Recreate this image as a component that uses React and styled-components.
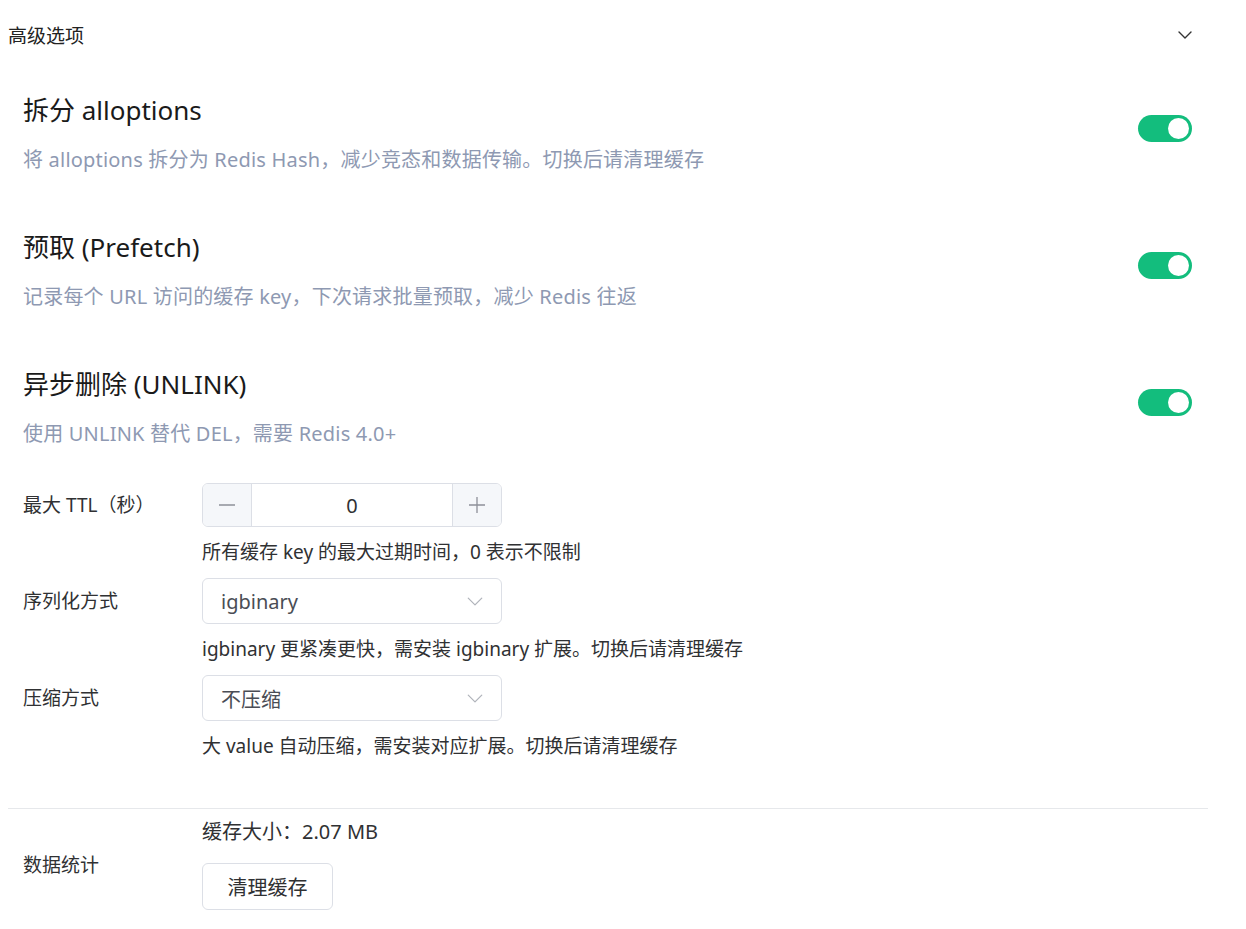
import React from 'react';
import styled, { createGlobalStyle } from 'styled-components';

const GlobalStyle = createGlobalStyle`
  body {
    margin: 0;
    background: #fff;
    font-family: "Noto Sans", "Noto Sans CJK SC", sans-serif;
    color: #303133;
  }
`;

const Panel = styled.div`
  width: 1200px;
  padding: 0 38px 0 8px;
`;

const Header = styled.div`
  display: flex;
  align-items: center;
  justify-content: space-between;
  height: 70px;
  padding-right: 16px;
  font-size: 19px;
  color: #222;
`;

const Body = styled.div`
  padding: 2px 16px 0 15px;
`;

const SwitchRow = styled.div`
  display: flex;
  justify-content: space-between;
  align-items: flex-start;
  padding: 20px 0 35px;
`;

const SwitchText = styled.div`
  display: flex;
  flex-direction: column;
  gap: 18px;
`;

const Title = styled.div`
  font-size: 26px;
  line-height: 36px;
  color: #1a1a1a;
`;

const Desc = styled.div`
  font-size: 20px;
  line-height: 28px;
  letter-spacing: 0.2px;
  color: #8e99b2;
`;

const Toggle = styled.div`
  width: 54px;
  height: 27px;
  margin-top: 23px;
  border-radius: 14px;
  background: #13bd7d;
  display: flex;
  align-items: center;
  justify-content: flex-end;
  padding: 0 3px;
  box-sizing: border-box;

  &::after {
    content: "";
    width: 21px;
    height: 21px;
    border-radius: 50%;
    background: #fff;
  }
`;

const FormItem = styled.div`
  display: flex;
  align-items: ${(p) => (p.center ? 'center' : 'flex-start')};
  margin-bottom: ${(p) => p.mb || 0}px;
`;

const Label = styled.div`
  width: 179px;
  flex-shrink: 0;
  font-size: 19px;
  line-height: ${(p) => p.h || 44}px;
  color: #303133;
`;

const Control = styled.div`
  display: flex;
  flex-direction: column;
  align-items: flex-start;
`;

const Help = styled.div`
  margin-top: 12px;
  font-size: 19px;
  line-height: 26px;
  color: #303133;
`;

const NumberBox = styled.div`
  display: flex;
  width: 300px;
  height: 44px;
  box-sizing: border-box;
  border: 1px solid #dcdfe6;
  border-radius: 6px;
  overflow: hidden;
`;

const StepButton = styled.div`
  width: 48px;
  display: flex;
  align-items: center;
  justify-content: center;
  background: #f5f7fa;
  border-${(p) => (p.side === 'left' ? 'right' : 'left')}: 1px solid #dcdfe6;
  color: #8d9099;
`;

const NumberValue = styled.div`
  flex: 1;
  display: flex;
  align-items: center;
  justify-content: center;
  font-size: 20px;
  color: #303133;
`;

const Select = styled.div`
  display: flex;
  align-items: center;
  justify-content: space-between;
  width: 300px;
  height: 46px;
  box-sizing: border-box;
  padding: 0 18px;
  border: 1px solid #dcdfe6;
  border-radius: 6px;
  font-size: 20px;
  color: #4a4d55;
`;

const Divider = styled.div`
  height: 1px;
  background: #e6e8eb;
  margin: 49px 0 10px -15px;
  width: 1200px;
`;

const Stat = styled.div`
  font-size: 20px;
  line-height: 26px;
  color: #303133;
`;

const Button = styled.button`
  margin-top: 18px;
  width: 131px;
  height: 47px;
  border: 1px solid #dcdfe6;
  border-radius: 6px;
  background: #fff;
  font-family: inherit;
  font-size: 20px;
  color: #303133;
`;

const Chevron = ({ size = 14, color = '#333', width = 1.4 }) => (
  <svg width={size} height={size / 2 + 1} viewBox="0 0 14 8" fill="none">
    <path d="M1 1l6 6 6-6" stroke={color} strokeWidth={width} strokeLinecap="round" strokeLinejoin="round" />
  </svg>
);

const switches = [
  { title: '拆分 alloptions', desc: '将 alloptions 拆分为 Redis Hash，减少竞态和数据传输。切换后请清理缓存' },
  { title: '预取 (Prefetch)', desc: '记录每个 URL 访问的缓存 key，下次请求批量预取，减少 Redis 往返' },
  { title: '异步删除 (UNLINK)', desc: '使用 UNLINK 替代 DEL，需要 Redis 4.0+' },
];

const App = () => (
  <>
    <GlobalStyle />
    <Panel>
      <Header>
        <span>高级选项</span>
        <Chevron />
      </Header>
      <Body>
        {switches.map((s) => (
          <SwitchRow key={s.title}>
            <SwitchText>
              <Title>{s.title}</Title>
              <Desc>{s.desc}</Desc>
            </SwitchText>
            <Toggle />
          </SwitchRow>
        ))}

        <FormItem mb={13}>
          <Label>最大 TTL（秒）</Label>
          <Control>
            <NumberBox>
              <StepButton side="left">
                <svg width="18" height="18" viewBox="0 0 18 18"><path d="M1 9h16" stroke="currentColor" strokeWidth="1.3" /></svg>
              </StepButton>
              <NumberValue>0</NumberValue>
              <StepButton side="right">
                <svg width="18" height="18" viewBox="0 0 18 18"><path d="M1 9h16M9 1v16" stroke="currentColor" strokeWidth="1.3" /></svg>
              </StepButton>
            </NumberBox>
            <Help>所有缓存 key 的最大过期时间，0 表示不限制</Help>
          </Control>
        </FormItem>

        <FormItem mb={13}>
          <Label h={46}>序列化方式</Label>
          <Control>
            <Select>
              <span>igbinary</span>
              <Chevron size={16} color="#b0b3ba" width={1.1} />
            </Select>
            <Help>igbinary 更紧凑更快，需安装 igbinary 扩展。切换后请清理缓存</Help>
          </Control>
        </FormItem>

        <FormItem>
          <Label h={46}>压缩方式</Label>
          <Control>
            <Select>
              <span>不压缩</span>
              <Chevron size={16} color="#b0b3ba" width={1.1} />
            </Select>
            <Help>大 value 自动压缩，需安装对应扩展。切换后请清理缓存</Help>
          </Control>
        </FormItem>

        <Divider />

        <FormItem center>
          <Label h={26}>数据统计</Label>
          <Control>
            <Stat>缓存大小：2.07 MB</Stat>
            <Button>清理缓存</Button>
          </Control>
        </FormItem>
      </Body>
    </Panel>
  </>
);

export default App;
